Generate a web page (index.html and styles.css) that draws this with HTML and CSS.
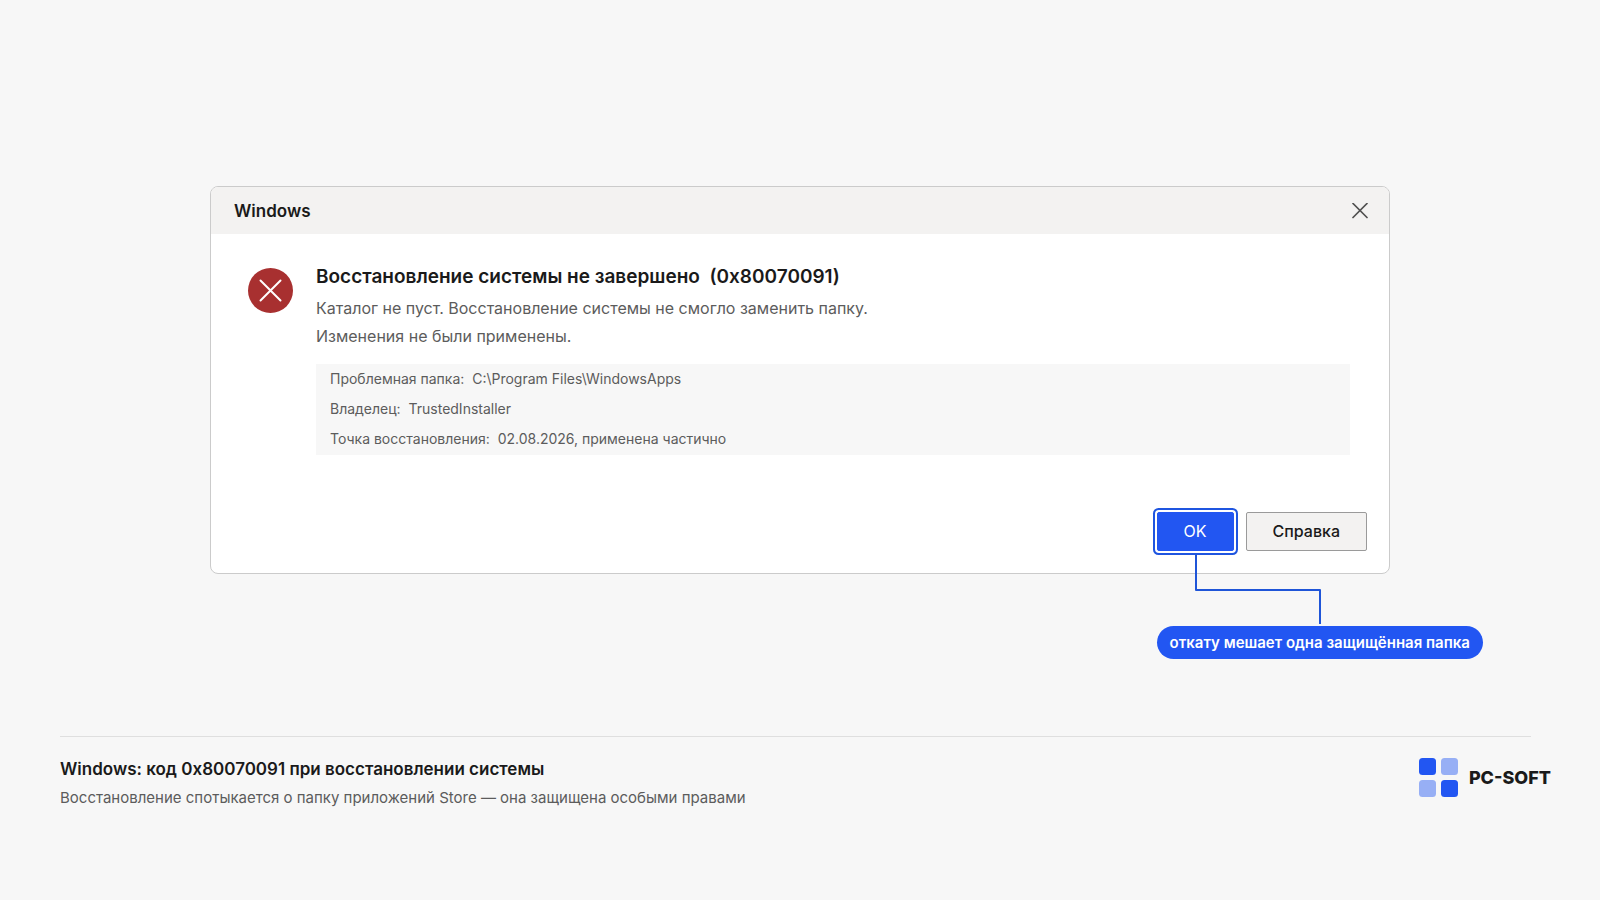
FILE: index.html
```html
<!DOCTYPE html>
<html lang="ru">
<head>
<meta charset="utf-8">
<meta name="viewport" content="width=device-width, initial-scale=1">
<title>Windows: код 0x80070091</title>
<link rel="stylesheet" href="styles.css">
</head>
<body>
<main class="stage">
  <section class="dialog" role="alertdialog" aria-labelledby="dialog-title" aria-describedby="dialog-text">
    <header class="dialog-bar">
      <span class="dialog-app">Windows</span>
      <button class="close" type="button" aria-label="Закрыть">
        <svg width="16" height="16" viewBox="0 0 16 16" fill="none" stroke="currentColor" stroke-width="1.7" stroke-linecap="round"><path d="M1 .5l14 14M15 .5l-14 14"/></svg>
      </button>
    </header>
    <div class="dialog-body">
      <svg class="error-icon" width="45" height="45" viewBox="0 0 45 45" fill="none"><circle cx="22.5" cy="22.5" r="22.5" fill="#a83030"/><path d="M12.5 12.5l20 20M32.500 12.5l-20 20" stroke="#fff" stroke-width="2" stroke-linecap="round"/></svg>
      <div class="message">
        <h1 class="message-title" id="dialog-title">Восстановление системы не завершено&nbsp; (0x80070091)</h1>
        <p class="message-text" id="dialog-text">Каталог не пуст. Восстановление системы не смогло заменить папку.<br>Изменения не были применены.</p>
        <ul class="details">
          <li>Проблемная папка:&nbsp; C:\Program Files\WindowsApps</li>
          <li>Владелец:&nbsp; TrustedInstaller</li>
          <li>Точка восстановления:&nbsp; 02.08.2026, применена частично</li>
        </ul>
      </div>
    </div>
    <div class="actions">
      <div class="marked">
        <button class="button primary" type="button">OK</button>
        <svg class="connector" width="128" height="72" viewBox="0 0 128 72" fill="none" stroke="#1f55d8" stroke-width="2" stroke-linejoin="round"><path d="M2 0V36H126V70"/></svg>
        <span class="callout">откату мешает одна защищённая папка</span>
      </div>
      <button class="button" type="button">Справка</button>
    </div>
  </section>
</main>
<footer class="footer">
  <hr class="rule">
  <div class="footer-row">
    <div>
      <h2 class="footer-title">Windows: код 0x80070091 при восстановлении системы</h2>
      <p class="footer-text">Восстановление спотыкается о папку приложений Store — она защищена особыми правами</p>
    </div>
    <div class="brand">
      <svg width="39" height="39" viewBox="0 0 39 39" fill="#2256f2"><rect width="17" height="17" rx="3.500"/><rect x="22" width="17" height="17" rx="3.500" opacity=".45"/><rect y="22" width="17" height="17" rx="3.500" opacity=".45"/><rect x="22" y="22" width="17" height="17" rx="3.500"/></svg>
      <span>PC-SOFT</span>
    </div>
  </div>
</footer>
</body>
</html>
```
FILE: styles.css
```css
* { box-sizing: border-box; }
body {
  margin: 0;
  min-height: 100vh;
  display: flex;
  flex-direction: column;
  background: #f7f7f7;
  color: #1a1a1a;
  font-family: Inter, "Noto Sans", sans-serif;
}
h1, h2, p, ul { margin: 0; }
.stage { padding: 186px 210px 0; }
.dialog {
  border: 1px solid #cbcbcb;
  border-radius: 8px;
  background: #fff;
}
.dialog-bar {
  display: flex;
  align-items: center;
  justify-content: space-between;
  height: 47px;
  padding: 0 21px 0 23px;
  border-radius: 7px 7px 0 0;
  background: #f3f2f1;
}
.dialog-app { font-size: 17px; font-weight: 600; }
.close {
  display: flex;
  padding: 0;
  border: 0;
  background: none;
  color: #505050;
}
.dialog-body {
  display: flex;
  align-items: flex-start;
  gap: 23px;
  padding: 27px 39px 0 37px;
}
.error-icon { flex: none; margin-top: 7px; }
.message { flex: 1; }
.message-title {
  font-size: 19px;
  font-weight: 600;
  line-height: 32px;
}
.message-text {
  margin-top: 1px;
  color: #5c5c5c;
  font-size: 16px;
  line-height: 28px;
}
.details {
  margin-top: 14px;
  padding: 0 14px 1px;
  list-style: none;
  background: #f7f7f7;
  color: #5c5c5c;
  font-size: 14px;
  line-height: 30px;
}
.actions {
  display: flex;
  justify-content: flex-end;
  gap: 12px;
  padding: 57px 22px 22px;
}
.button {
  height: 39px;
  padding: 0 26px 1px;
  border: 1px solid #9a9a9a;
  border-radius: 2px;
  background: #f3f2f1;
  color: #1a1a1a;
  font: 500 16px Inter, "Noto Sans", sans-serif;
}
.marked { position: relative; }
.primary {
  border-color: #2256f2;
  background: #2256f2;
  color: #fff;
  font-weight: 400;
  box-shadow: 0 0 0 2px #fff, 0 0 0 4px #1f55e0;
}
.connector {
  position: absolute;
  top: 42px;
  left: 37px;
}
.callout {
  position: absolute;
  top: 114px;
  left: 0;
  padding: 0 13px;
  border-radius: 17px;
  background: #2256f2;
  color: #fff;
  font-size: 15px;
  font-weight: 600;
  line-height: 33px;
  white-space: nowrap;
}
.footer { margin-top: 162px; padding: 0 49px 0 60px; }
.rule {
  height: 1px;
  margin: 0 20px 0 0;
  border: 0;
  background: #dfdfdf;
}
.footer-row {
  display: flex;
  align-items: flex-start;
  justify-content: space-between;
  padding-top: 18px;
}
.footer-title {
  font-size: 17px;
  font-weight: 600;
  line-height: 28px;
}
.footer-text {
  color: #5c5c5c;
  font-size: 15px;
  line-height: 30px;
}
.brand {
  display: flex;
  align-items: center;
  gap: 11px;
  padding-top: 3px;
  font-size: 18px;
  font-weight: 800;
}
```
